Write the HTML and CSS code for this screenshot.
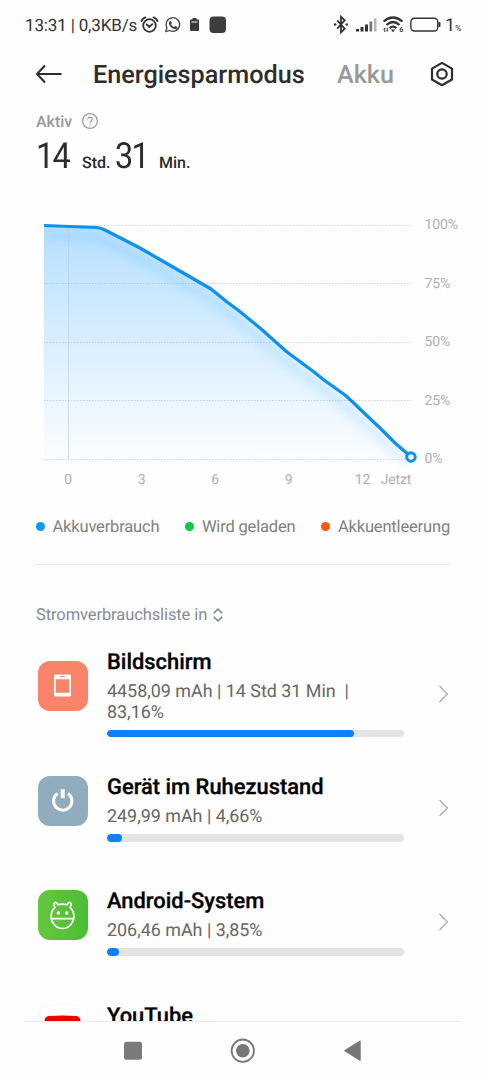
FILE: index.html
```html
<!DOCTYPE html>
<html lang="de">
<head>
<meta charset="utf-8">
<title>Energiesparmodus</title>
<link rel="stylesheet" href="styles.css">
</head>
<body>
<div class="phone">
  <header class="status">
    <span class="clock">13:31 | 0,3KB/s</span>
    <svg class="status-left" width="88" height="20" viewBox="0 0 88 20">
      <g fill="none" stroke="#333" stroke-width="1.8" stroke-linecap="round">
        <circle cx="9.500" cy="10.500" r="6.300"/>
        <path d="M6.800 9.500 9.300 12l3-2.800M1.500 6.200C2.100 4 3.700 2.800 5.500 2.300M17.500 6.200c-.6-2.200-2.200-3.400-4-3.900"/>
      </g>
      <path d="M25.700 16.700l1.200-3.900a6.800 6.800 0 1 1 2.700 2.700z" fill="none" stroke="#444" stroke-width="1.300" stroke-linejoin="round"/>
      <path d="M29.800 6.300c.8-.6 1.300-.3 1.600.6l.5 1.200c.1.500-.8 1-.7 1.400.7 1.200 1.600 2 2.800 2.500.5.100.9-1.100 1.500-.9l1.800.9c.5.300-.1 1.700-1 2.100-3.400 1.100-8.200-4-7.200-6.900z" fill="#444"/>
      <path d="M52.500 3h4v1.500h1.500q1 0 1 1V15q0 1-1 1h-7q-1 0-1-1V5.500q0-1 1-1h1.500z" fill="#3a3a3a"/>
      <path d="M51.500 6h6v2h-6z" fill="#999"/>
      <rect x="69.500" y="1.500" width="16.500" height="16.500" rx="4" fill="#3d3d3d"/>
    </svg>
    <svg class="status-right" width="110" height="20" viewBox="0 0 110 20">
      <path d="M4.200 5.300l7.500 8.400-3.700 3.600V1.700l3.700 3.600-7.500 8.400" fill="none" stroke="#333" stroke-width="1.800"/>
      <circle cx="2.200" cy="9.500" r="1.300" fill="#333"/><circle cx="13.700" cy="9.500" r="1.300" fill="#333"/>
      <path d="M23 14h3v2.500h-3zM27.500 12h3v4.500h-3zM32 9.500h3v7h-3z" fill="#333"/>
      <path d="M36.500 6.500h2.700v10h-2.700z" fill="#777"/><path d="M41 3.500h2.500v13H41z" fill="#b5b5b5"/>
      <g fill="none" stroke="#333" stroke-width="2.200"><path d="M50.500 6.500q9.500-8 19 0M53.500 10q6.500-6 13 0M56.500 13.200q3.500-3 7 0"/></g>
      <path d="M57.800 14.400h4.400l-2.200 2.800z" fill="#333"/>
      <path d="M50.500 14.500l1.300-1.500v4M54.200 12.500v4.300" fill="none" stroke="#333"/>
      <text class="wifi-mark" x="66.300" y="17">6</text>
      <rect x="77.900" y="3.200" width="26.800" height="12.800" rx="3.500" fill="none" stroke="#333" stroke-width="1.400"/>
      <path d="M105.500 7h1q1 0 1 1v3q0 1-1 1h-1z" fill="#333"/>
    </svg>
    <span class="level">1<small>%</small></span>
  </header>

  <nav class="tabs">
    <svg class="back" width="28" height="20" viewBox="0 0 28 20"><path d="M10 1.500 2 10l8 8.500M2 10h24.500" fill="none" stroke="#2d2d2d" stroke-width="2"/></svg>
    <span class="tab tab-active">Energiesparmodus</span>
    <span class="tab">Akku</span>
    <svg class="gear" width="26" height="26" viewBox="0 0 26 26"><g fill="none" stroke="#2d2d2d" stroke-width="2.200" stroke-linejoin="round"><path d="M13 1.900 23 7.600v10.900L13 24.200 3 18.500V7.600z"/><circle cx="13" cy="13" r="4.700"/></g></svg>
  </nav>

  <section class="uptime">
    <div class="uptime-label">Aktiv
      <svg width="18" height="18" viewBox="0 0 18 18"><circle cx="9" cy="9" r="7.400" fill="none" stroke="#999" stroke-width="1.200"/><path d="M6.700 7.300c0-3 4.700-3 4.600 0 0 1.700-2.300 1.700-2.300 3.500M9 12.200v1.400" fill="none" stroke="#999" stroke-width="1.200"/></svg>
    </div>
    <div class="uptime-value"><b class="num hours">14</b><span class="hour-unit">Std.</span><b class="num minutes">31</b><span>Min.</span></div>
  </section>

  <svg class="chart" width="486" height="296" viewBox="0 204 486 296">
    <defs>
      <linearGradient id="area" x1="0" y1="225" x2="0" y2="459" gradientUnits="userSpaceOnUse"><stop offset="0" stop-color="#b5dfff"/><stop offset=".5" stop-color="#d8eeff"/><stop offset="1" stop-color="#fbfdff"/></linearGradient>
      <filter id="soft" x="-10%" y="-10%" width="120%" height="130%"><feGaussianBlur stdDeviation="4"/></filter>
      <clipPath id="plot"><path d="M44 210H430V475H44z"/></clipPath>
    </defs>
    <path d="M44 225.500L97 227.500 105 230 140 248 166 263 192 278 211 289 227 302 238 310 260 328 287 352 314 372 324 380 345 395 361 410 410 457V459H44z" fill="url(#area)"/>
    <path class="shadow" clip-path="url(#plot)" d="M44 236L97 238 105 241 140 259 166 274 192 289 211 300 238 321 260 339 287 363 314 383 345 406 361 421 408 463"/>
    <path d="M68.500 227V459" stroke="#b9cedb" stroke-opacity=".65"/>
    <path class="grid" d="M44 225.500H411M44 283.500H411M44 342.500H411M44 400.500H411M44 459.500H411"/>
    <path class="line" d="M44 225.500L97 227.500Q101 228 105 230L140 248 166 263 192 278 211 289 227 302 238 310 260 328 287 352 314 372 324 380 345 395Q353 402 361 410L381 429 395 443 410 456"/>
    <circle cx="411" cy="457" r="4.200" fill="#fff" stroke="#0f91e8" stroke-width="3"/>
    <g class="axis">
      <text x="424.500" y="229">100%</text><text x="424.500" y="287.500">75%</text><text x="424.500" y="346">50%</text><text x="424.500" y="404.500">25%</text><text x="424.500" y="463">0%</text>
      <g text-anchor="middle"><text x="68" y="484">0</text><text x="141.500" y="484">3</text><text x="215" y="484">6</text><text x="288.500" y="484">9</text><text x="362.500" y="484">12</text><text x="396" y="484">Jetzt</text></g>
    </g>
  </svg>

  <div class="legend">
    <span><i class="dot blue"></i>Akkuverbrauch</span>
    <span><i class="dot green"></i>Wird geladen</span>
    <span><i class="dot orange"></i>Akkuentleerung</span>
  </div>

  <main class="usage">
    <div class="sort">Stromverbrauchsliste in
      <svg width="10" height="14" viewBox="0 0 10 14"><path d="M.8 5.200 5 1.200l4.200 4M.8 8.800l4.200 4 4.200-4" fill="none" stroke="#858b9b" stroke-width="1.600"/></svg>
    </div>
    <article class="item item-tall">
      <svg class="app" width="50" height="50" viewBox="0 0 50 50"><rect width="50" height="50" rx="12" fill="#fa8469"/><path fill-rule="evenodd" d="M17.500 13.500h14q1.500 0 1.500 1.500v19q0 1.500-1.500 1.500h-14q-1.500 0-1.500-1.500V15q0-1.500 1.500-1.500zM17.700 18.300v13.400h13.600V18.300zM22 15.300v1h5v-1z" fill="#fff"/></svg>
      <div class="info"><h2>Bildschirm</h2><p>4458,09 mAh | 14 Std 31 Min&nbsp; |<br>83,16%</p><div class="bar"><div class="fill" style="width:83.16%"></div></div></div>
      <svg class="chevron" width="12" height="18" viewBox="0 0 12 18"><path d="M1.500 1 9.500 9l-8 8" fill="none" stroke="#aaa" stroke-width="1.300"/></svg>
    </article>
    <article class="item">
      <svg class="app" width="50" height="50" viewBox="0 0 50 50"><rect width="50" height="50" rx="12" fill="#91acbe"/><path d="M19.500 17.400a9.200 9.200 0 1 0 10.500 0" fill="none" stroke="#fff" stroke-width="3"/><path d="M22.700 13.200h4v9h-4z" fill="#fff"/></svg>
      <div class="info"><h2>Gerät im Ruhezustand</h2><p>249,99 mAh | 4,66%</p><div class="bar"><div class="fill" style="width:5.1%"></div></div></div>
      <svg class="chevron" width="12" height="18" viewBox="0 0 12 18"><path d="M1.500 1 9.500 9l-8 8" fill="none" stroke="#aaa" stroke-width="1.300"/></svg>
    </article>
    <article class="item">
      <svg class="app" width="50" height="50" viewBox="0 0 50 50"><defs><linearGradient id="green"><stop stop-color="#65c83f"/><stop offset="1" stop-color="#4bbd34"/></linearGradient></defs><rect width="50" height="50" rx="12" fill="url(#green)"/><g fill="none" stroke="#fff" stroke-width="1.700" stroke-linejoin="round" stroke-linecap="round"><path d="M17 17.300C13.800 12.600 18 10.500 20 14.800Q24.500 13.400 29 14.800C31 10.500 35.200 12.600 32 17.300Q36 21 36 27C36 31 32 38.500 24.500 38.500S13 31 13 27Q13 21 17 17.300zM13.500 28.700h22"/></g><circle cx="20.300" cy="23" r="1.800" fill="#fff"/><circle cx="28.700" cy="23" r="1.800" fill="#fff"/></svg>
      <div class="info"><h2>Android-System</h2><p>206,46 mAh | 3,85%</p><div class="bar"><div class="fill" style="width:4.1%"></div></div></div>
      <svg class="chevron" width="12" height="18" viewBox="0 0 12 18"><path d="M1.500 1 9.500 9l-8 8" fill="none" stroke="#aaa" stroke-width="1.300"/></svg>
    </article>
    <article class="item">
      <svg class="app" width="50" height="50" viewBox="0 0 50 50"><rect x=".5" y=".5" width="49" height="49" rx="12" fill="#fff" stroke="#f8f8f8"/><path d="M6.500 17q0-4 4-5 14-1 28 0 4 1 4 5v15q0 4-4 5-14 1.500-28 0-4-1-4-5z" fill="#ed0000"/></svg>
      <div class="info"><h2>YouTube</h2></div>
    </article>
  </main>

  <footer class="system-nav">
    <svg width="486" height="58" viewBox="0 1022 486 58"><rect x="124" y="1041.700" width="18" height="18" rx="2.500" fill="#7a7a7a"/><circle cx="242.800" cy="1050.700" r="11.200" fill="none" stroke="#777" stroke-width="1.800"/><circle cx="242.800" cy="1050.700" r="6.800" fill="#777"/><path d="M345 1050.700l15-9.300v18.600z" fill="#777" stroke="#777" stroke-width="1.500" stroke-linejoin="round"/></svg>
  </footer>
</div>
</body>
</html>
```
FILE: styles.css
```css
* { box-sizing: border-box; }
body { margin: 0; background: #fefefe; font-family: Roboto, sans-serif; text-rendering: geometricPrecision; }
svg { display: block; flex: none; }
h2, p { margin: 0; font-weight: 400; }
.phone { width: 486px; height: 1080px; display: flex; flex-direction: column; overflow: hidden; white-space: nowrap; }
.status { height: 50px; flex: none; display: flex; align-items: center; padding-left: 25px; color: #333; }
.clock { width: 115px; font-size: 17px; letter-spacing: -.15px; padding-top: 1px; }
.status-left { margin-right: 105px; }
.level { font-size: 18px; margin-left: 2px; padding-top: 1px; }
.level small { font-size: 8.5px; }
.wifi-mark { font-size: 7px; font-weight: 700; fill: #444; }
.tabs { height: 48px; flex: none; display: flex; align-items: center; padding-left: 35px; }
.back { margin-right: 30px; }
.tab { font-size: 25.2px; font-weight: 500; color: #999; padding-top: 2px; }
.tab-active { width: 244px; color: #2d2d2d; }
.gear { margin-left: auto; margin-right: 31px; }
.uptime { height: 106px; flex: none; padding: 12px 36px 0; }
.uptime-label { display: flex; align-items: center; gap: 9px; height: 22px; font-size: 16px; font-weight: 500; color: #999; }
.uptime-value { display: flex; align-items: baseline; margin-top: 3px; font-size: 16px; font-weight: 500; line-height: 42px; color: #2b2b2b; }
.num { font-size: 36px; font-weight: 400; letter-spacing: -2px; transform: scaleX(.9); transform-origin: 0 0; }
.hours { width: 46px; }
.hour-unit { width: 33px; }
.minutes { width: 44px; }
.chart { height: 296px; }
.grid { fill: none; stroke: #aaa; stroke-opacity: .5; stroke-dasharray: 1.5 1.5; }
.line { fill: none; stroke: #0f91e8; stroke-width: 3.2; stroke-linejoin: round; }
.shadow { fill: none; stroke: #3aa8f5; stroke-opacity: .16; stroke-width: 8; filter: url(#soft); }
.axis { font-size: 14px; letter-spacing: -.15px; fill: #b0b0b0; }
.legend { height: 65px; flex: none; display: flex; align-items: flex-start; justify-content: space-between; margin: 0 36px; padding-top: 17px; border-bottom: 1px solid #e6e6e6; font-size: 16.500px; letter-spacing: -.17px; line-height: 22px; color: #808080; }
.legend span { display: flex; align-items: center; gap: 7.500px; }
.dot { width: 9px; height: 9px; border-radius: 50%; margin-top: -3px; }
.blue { background: #0d99fb; }
.green { background: #0bc84a; }
.orange { background: #fa5a0a; }
.usage { height: 456px; flex: none; overflow: hidden; padding: 38px 36px 0; }
.sort { display: flex; align-items: center; gap: 6px; height: 24px; font-size: 16.500px; letter-spacing: -.1px; color: #858b9b; }
.item { height: 114.3px; display: flex; padding-top: 19px; padding-left: 1.500px; }
.item-tall { height: 127px; margin-top: 4px; }
.app { margin: -1.500px 19.500px 0 0; }
.item-tall .app { margin-top: 11px; }
.info { width: 298px; }
.info h2 { margin-top: -6px; height: 33px; font-size: 21.900px; line-height: 34px; font-weight: 500; color: #000; -webkit-text-stroke: .3px #000; }
.item-tall .info h2 { margin-top: -4px; }
.info p { font-size: 17.900px; line-height: 21px; color: #666; margin-top: 2px; }
.bar { height: 7.500px; margin-top: 7px; border-radius: 4px; background: #e3e3e3; overflow: hidden; }
.item-tall .bar { margin-top: 6.500px; }
.fill { height: 100%; border-radius: 4px; background: #127ff5; }
.chevron { margin: 22px 0 0 34.500px; }
.item-tall .chevron { margin-top: 35px; }
.system-nav { height: 59px; flex: none; border-top: 1px solid #ececec; margin: 0 25px; }
.system-nav svg { margin-left: -25px; }
```
